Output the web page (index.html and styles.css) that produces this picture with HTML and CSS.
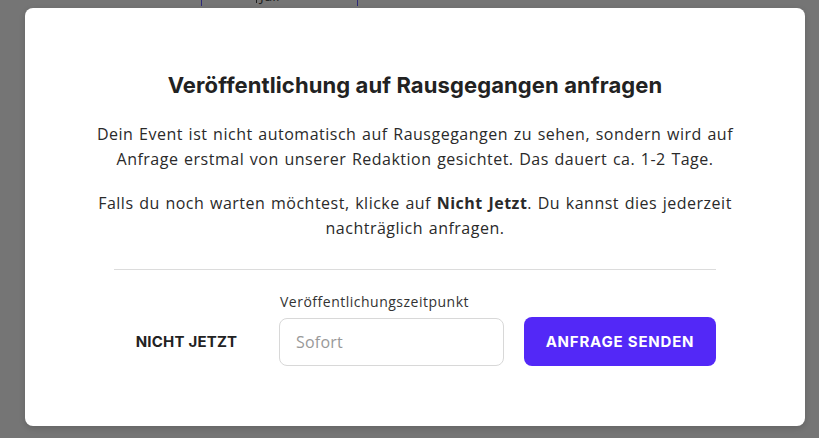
FILE: index.html
```html
<!DOCTYPE html>
<html lang="de">
<head>
<meta charset="utf-8">
<title>Veröffentlichung anfragen</title>
<link rel="stylesheet" href="styles.css">
</head>
<body>
<div class="backdrop-fragment"><span class="cursor"></span>Juli</div>
<div class="modal">
  <h1 class="title">Veröffentlichung auf Rausgegangen anfragen</h1>
  <p class="text">Dein Event ist nicht automatisch auf Rausgegangen zu sehen, sondern wird auf<br>Anfrage erstmal von unserer Redaktion gesichtet. Das dauert ca. 1-2 Tage.</p>
  <p class="text second">Falls du noch warten möchtest, klicke auf <b>Nicht Jetzt</b>. Du kannst dies jederzeit<br>nachträglich anfragen.</p>
  <div class="divider"></div>
  <div class="actions">
    <button class="btn-ghost">NICHT JETZT</button>
    <div class="field">
      <label class="label">Veröffentlichungszeitpunkt</label>
      <div class="input">Sofort</div>
    </div>
    <button class="btn-primary">ANFRAGE SENDEN</button>
  </div>
</div>
</body>
</html>
```

FILE: styles.css
```css
html, body {
  margin: 0;
  padding: 0;
}
body {
  background: #757575;
  width: 819px;
  height: 438px;
  overflow: hidden;
  position: relative;
  font-family: "Open Sans", sans-serif;
  padding-top: 8px;
  box-sizing: border-box;
}
.backdrop-fragment {
  position: absolute;
  left: 201px;
  top: -14px;
  width: 157px;
  height: 20px;
  box-sizing: border-box;
  padding-left: 54px;
  border-left: 1px solid #2e2a7a;
  border-right: 1px solid #2e2a7a;
  font-size: 14px;
  line-height: 20px;
  color: #1e1e1e;
}
.cursor {
  display: inline-block;
  width: 1px;
  height: 12px;
  background: #1e1e1e;
  margin-right: 3px;
  vertical-align: middle;
}
.modal {
  position: relative;
  margin-left: 25px;
  width: 780px;
  height: 418px;
  box-sizing: border-box;
  background: #fff;
  border-radius: 8px;
  padding: 63px 20px 0;
  display: flex;
  flex-direction: column;
  align-items: center;
  box-shadow: 0 2px 6px rgba(0,0,0,0.15);
}
.title {
  margin: 0;
  font-family: Inter, sans-serif;
  font-weight: 700;
  font-size: 22px;
  line-height: 28px;
  color: #222;
  letter-spacing: 0.1px;
}
.text {
  margin: 23px 0 0;
  font-size: 16px;
  line-height: 25px;
  color: #2a2a2a;
  text-align: center;
  letter-spacing: 0.5px;
  word-spacing: 1px;
  white-space: nowrap;
}
.text.second {
  margin-top: 19px;
}
.text b {
  font-weight: 700;
}
.divider {
  width: 602px;
  height: 1px;
  background: #dcdcdc;
  margin-top: 28px;
}
.actions {
  width: 602px;
  display: flex;
  align-items: flex-end;
  gap: 20px;
  margin-top: 21px;
}
button {
  font-family: Inter, sans-serif;
  font-weight: 700;
  font-size: 15px;
  border: none;
  border-radius: 8px;
  height: 49px;
  padding: 0;
  cursor: pointer;
}
.btn-ghost {
  background: transparent;
  color: #222;
  width: 145px;
  letter-spacing: 0.2px;
}
.field {
  display: flex;
  flex-direction: column;
}
.label {
  font-size: 14px;
  line-height: 20px;
  color: #333;
  padding-top: 1px;
  margin-bottom: 6px;
  padding-left: 1px;
  letter-spacing: 0.5px;
}
.input {
  width: 225px;
  height: 48px;
  box-sizing: border-box;
  border: 1px solid #d8d8d8;
  border-radius: 8px;
  padding: 0 16px;
  display: flex;
  align-items: center;
  font-size: 16px;
  color: #999;
  letter-spacing: 0.2px;
}
.btn-primary {
  background: #5328f7;
  color: #fff;
  width: 192px;
  letter-spacing: 0.8px;
}
```
